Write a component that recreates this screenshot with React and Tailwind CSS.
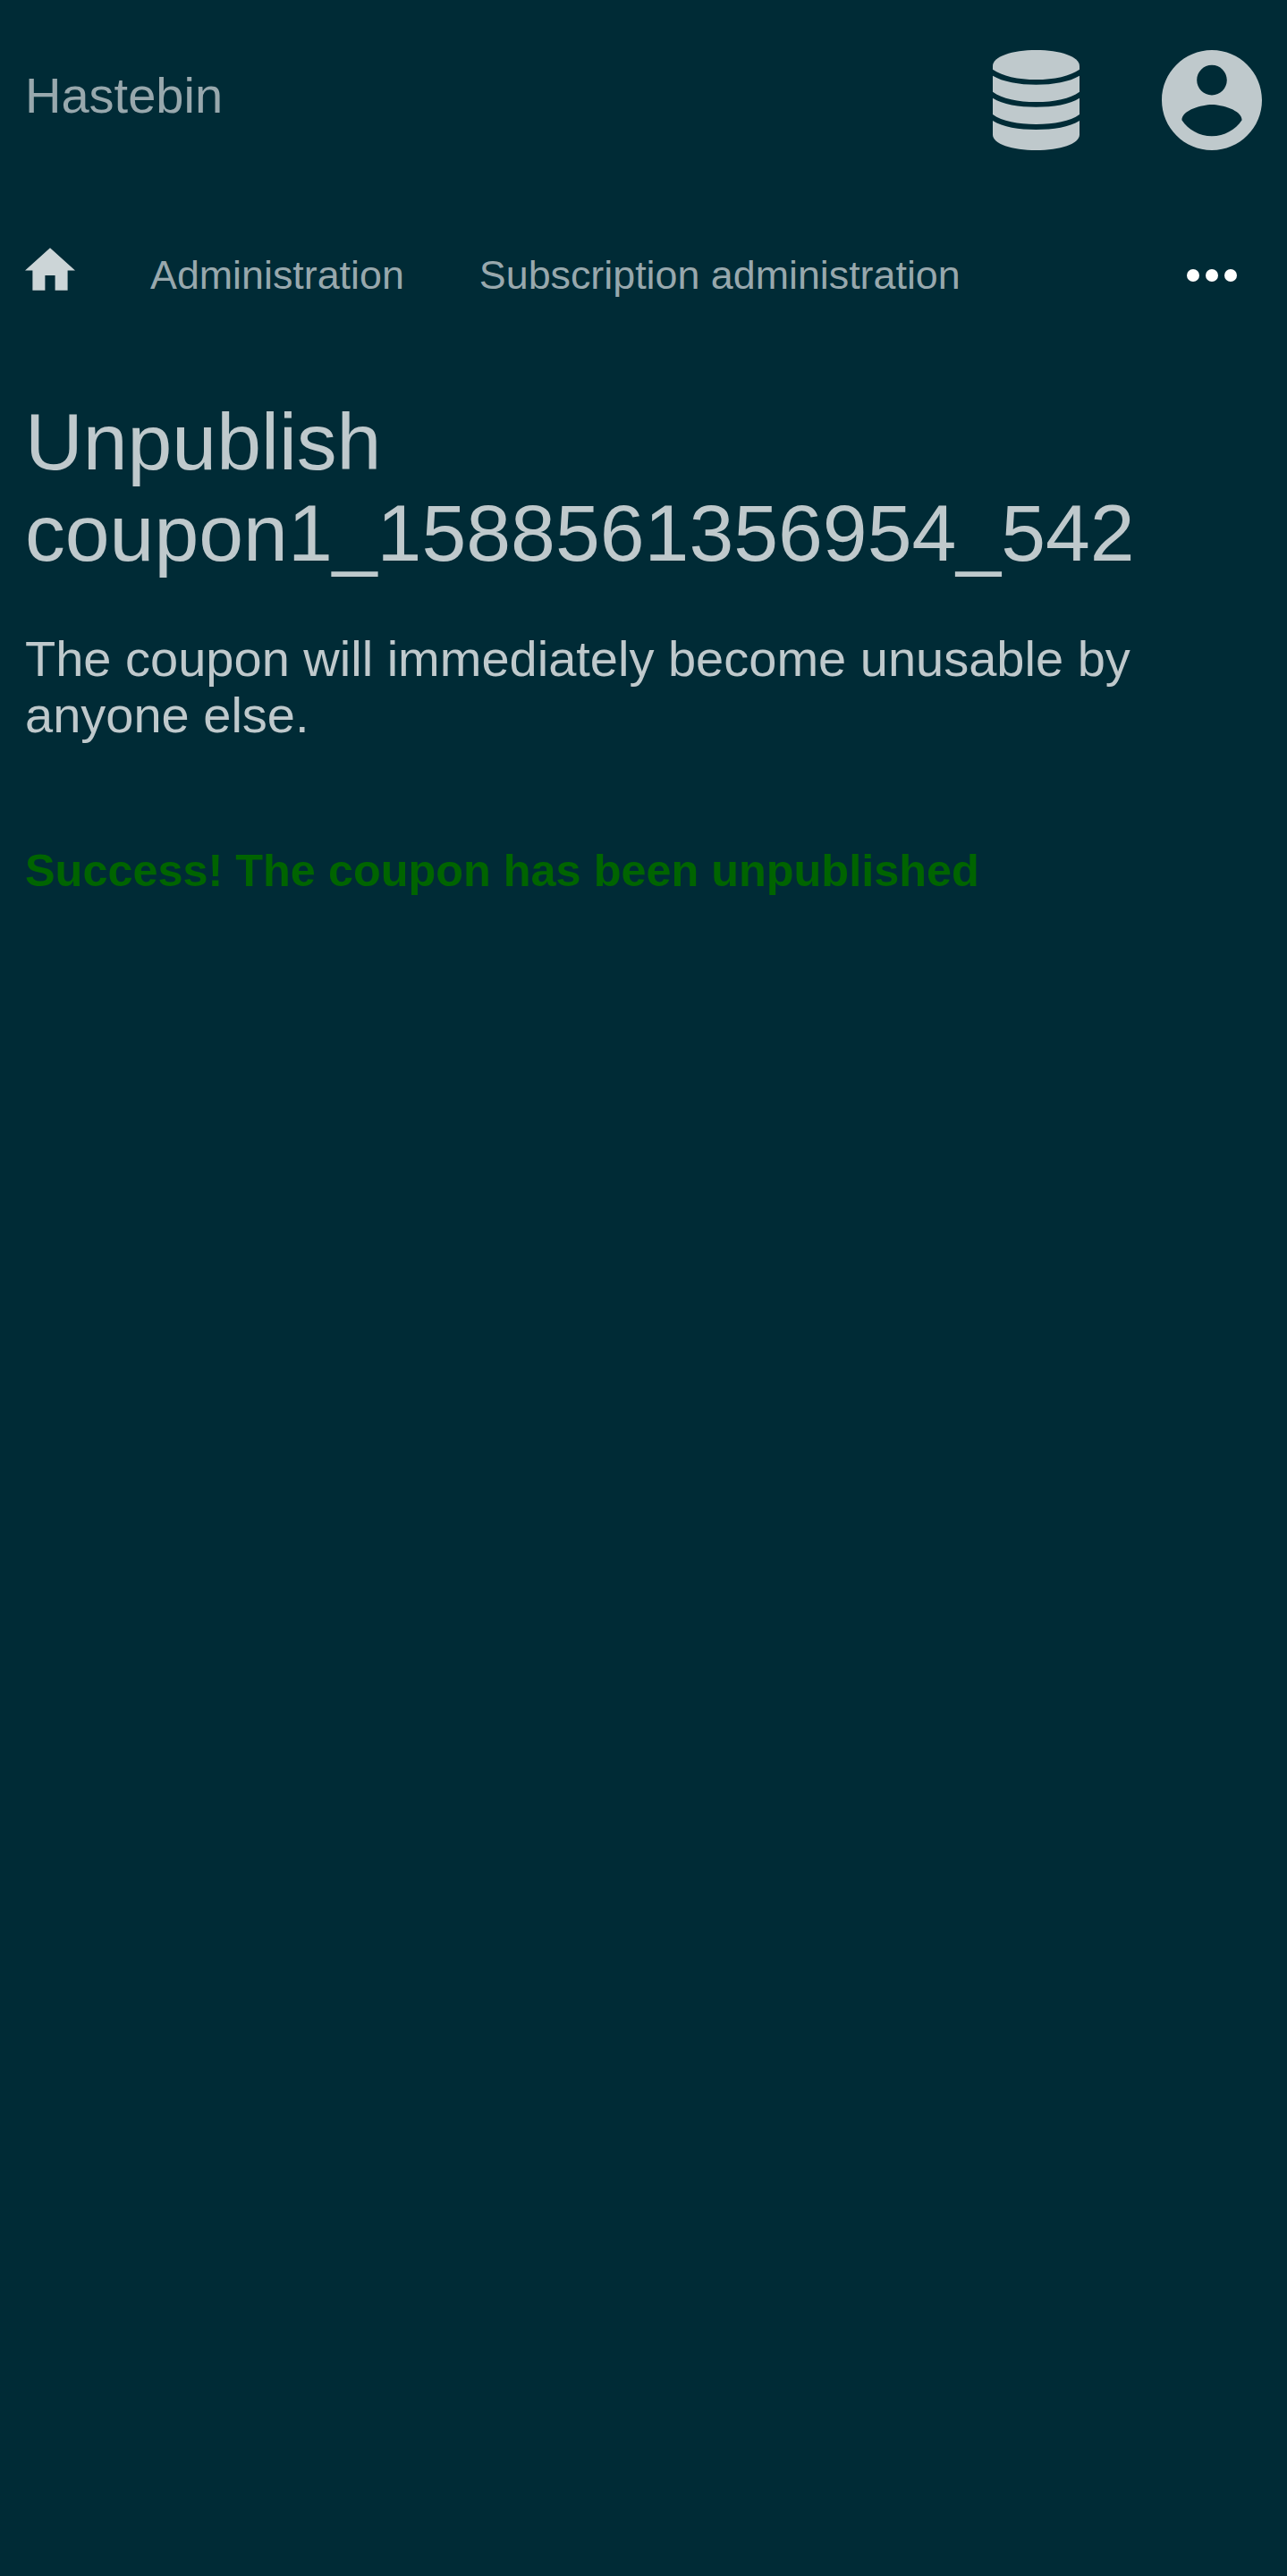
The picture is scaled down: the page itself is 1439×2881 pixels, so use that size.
export default function App() {
  return (
    <div className="min-h-[2881px] w-full bg-[#002b36] pr-[28.5px] pl-7 font-['Liberation_Sans',Arial,sans-serif] text-[#bfc9cc]">
      <header className="flex h-[224px] items-start justify-between pt-14">
        <a className="mt-[19px] text-[56px] leading-[64px] text-[#98a8ad]">Hastebin</a>
        <div className="flex">
          <svg className="mr-[92px] h-28 w-[97px]" viewBox="0 0 291 336" fill="currentColor" aria-label="Database">
            <path d="M0 53C0 22 65 0 145.500 0S291 22 291 53V65C260 87 206 99 145.500 99S31 87 0 65Z" />
            <path d="M0 86C33 106 88 116 145.500 116S258 106 291 86V140C260 163 206 174 145.500 174S31 163 0 140Z" />
            <path d="M0 161C33 182 88 191 145.500 191S258 182 291 161V216C260 239 206 249 145.500 249S31 239 0 216Z" />
            <path d="M0 237C33 258 88 267 145.500 267S258 258 291 237V284C291 314 226 336 145.500 336S0 314 0 284Z" />
          </svg>
          <svg className="h-28 w-28" viewBox="2 2 20 20" fill="currentColor" aria-label="Account">
            <path d="M12 2C6.480 2 2 6.480 2 12s4.480 10 10 10 10-4.480 10-10S17.520 2 12 2zm0 3c1.660 0 3 1.340 3 3s-1.340 3-3 3-3-1.340-3-3 1.340-3 3-3zm0 14.200c-2.500 0-4.710-1.280-6-3.220.030-1.990 4-3.080 6-3.080 1.990 0 5.970 1.090 6 3.080-1.290 1.940-3.500 3.220-6 3.220z" />
          </svg>
        </div>
      </header>
      <nav className="flex h-[168px] items-center text-[44.8px] leading-[52px] text-[#98a8ad]">
        <svg className="-mt-[14px] mr-[84px] h-[48px] w-14 text-[#ccd5d7]" viewBox="2 3 20 17" fill="currentColor" aria-label="Home">
          <path d="M10 20v-6h4v6h5v-8h3L12 3 2 12h3v8z" />
        </svg>
        <a className="mr-[84px] mb-[2px]">Administration</a>
        <a className="mb-[2px]">Subscription administration</a>
        <svg className="mr-7 ml-auto h-[14px] w-14 text-white" viewBox="0 0 16 4" fill="currentColor" aria-label="More">
          <circle cx="2" cy="2" r="2" />
          <circle cx="8" cy="2" r="2" />
          <circle cx="14" cy="2" r="2" />
        </svg>
      </nav>
      <main className="pt-[51px]">
        <h1 className="text-[89.6px] leading-[102px]">Unpublish coupon1_1588561356954_542</h1>
        <p className="mt-[58px] text-[56px] leading-[63px]">The coupon will immediately become unusable by anyone else.</p>
        <p className="mt-[114px] text-[50.4px] leading-[57px] font-bold text-[#006400]">Success! The coupon has been unpublished</p>
      </main>
    </div>
  );
}
